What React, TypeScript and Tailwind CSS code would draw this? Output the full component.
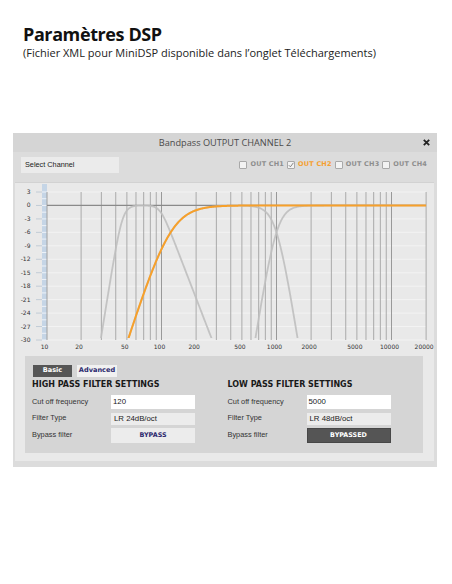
import React from 'react';

// frequency / level → plot coordinates (page pixels)
const X = (f: number) => 46.5 + 115 * Math.log10(f / 10);
const Y = (db: number) => 191 + ((3 - db) * 148) / 33;

const hp = (f: number, fc: number, n: number) => {
  const r = Math.pow(f / fc, n);
  return 20 * Math.log10(r / (1 + r));
};
const lp = (f: number, fc: number, n: number) => {
  const r = Math.pow(f / fc, n);
  return 20 * Math.log10(1 / (1 + r));
};
// straight slope (dB/oct) with a soft knee, sign picks rising or falling side
const knee = (f: number, fk: number, slope: number, dir: 1 | -1, k = 0.1) => {
  const o = (dir * Math.log2(f / fk)) / k;
  return -slope * k * (o > 30 ? o : Math.log(1 + Math.exp(o)));
};

const curve = (fn: (f: number) => number) => {
  const pts: string[] = [];
  for (let i = 0; i <= 500; i++) {
    const f = 10 * Math.pow(2000, i / 500);
    const db = Math.max(fn(f), -60);
    pts.push(`${X(f).toFixed(2)},${Y(db).toFixed(2)}`);
  }
  return 'M' + pts.join(' L');
};

const gridFreqs = [
  20, 30, 40, 50, 60, 70, 80, 90, 100, 200, 300, 400, 500, 600, 700, 800, 900, 1000, 2000, 3000, 4000, 5000,
  6000, 7000, 8000, 9000, 10000, 20000,
];
const xLabels = [10, 20, 50, 100, 200, 500, 1000, 2000, 5000, 10000, 20000];
const dbLabels = [3, 0, -3, -6, -9, -12, -15, -18, -21, -24, -27, -30];

function ResponseChart() {
  const ticks: number[] = [];
  for (let d = 3; d >= -30; d -= 1.5) ticks.push(d);

  return (
    <svg width="419" height="170" viewBox="15 182 419 170" className="block overflow-visible">
      <defs>
        <clipPath id="plot">
          <rect x="47" y="186" width="380" height="151" />
        </clipPath>
      </defs>

      {/* level ruler */}
      <rect x="42" y="183" width="5" height="156" fill="#c5d5e6" />
      {ticks.map((d) => (
        <line key={d} x1="42" x2="47" y1={Y(d)} y2={Y(d)} stroke="#eef3f9" strokeWidth="1" />
      ))}
      {dbLabels.map((d) => (
        <g key={d}>
          <line x1="36" x2="42" y1={Y(d)} y2={Y(d)} stroke="#c2ccd6" strokeWidth="1" />
          <text
            x="30.5"
            y={Y(d) + 2}
            textAnchor="end"
            fontSize="6"
            fill="#333"
            fontFamily="'DejaVu Sans', sans-serif"
          >
            {d}
          </text>
        </g>
      ))}

      {/* grid */}
      {dbLabels
        .filter((d) => d !== 0)
        .map((d) => (
          <line key={d} x1="47" x2="426" y1={Y(d)} y2={Y(d)} stroke="#f3f3f3" strokeWidth="1" />
        ))}
      <line x1="47" x2="47" y1="191" y2="339" stroke="#a0a0a0" strokeWidth="1" />
      {gridFreqs.map((f) => (
        <line
          key={f}
          x1={X(f)}
          x2={X(f)}
          y1="191"
          y2="339"
          stroke={[100, 1000, 10000].includes(f) ? '#999' : '#aaa'}
          strokeWidth="1"
        />
      ))}
      <line x1="47" x2="426" y1={Y(0)} y2={Y(0)} stroke="#8a8a8a" strokeWidth="1.3" />

      {xLabels.map((f) => (
        <text
          key={f}
          x={X(f) - 2}
          y="348"
          textAnchor="middle"
          fontSize="6"
          fill="#333"
          fontFamily="'DejaVu Sans', sans-serif"
        >
          {f}
        </text>
      ))}

      {/* other channels */}
      <g clipPath="url(#plot)" fill="none" stroke="#bfbfbf" strokeWidth="1.8" strokeOpacity="0.9">
        <path d={curve((f) => knee(f, 45.6, 48, -1) + knee(f, 97.6, 20, 1))} />
        <path d={curve((f) => hp(f, 120, 4) + lp(f, 1000, 8))} />
        <path d={curve((f) => hp(f, 1000, 8))} />
      </g>
      {/* current channel */}
      <g clipPath="url(#plot)" fill="none" stroke="#f7a02a" strokeWidth="2">
        <path d={curve((f) => hp(f, 120, 4))} />
      </g>
    </svg>
  );
}

function ChannelBox({ label, checked }: { label: string; checked?: boolean }) {
  return (
    <div className="flex items-center gap-[3px]">
      <span className="w-[8px] h-[8px] border border-[#a9a9a9] bg-[#f3f3f3] rounded-[1px] flex items-center justify-center">
        {checked && (
          <svg width="6" height="6" viewBox="0 0 6 6">
            <path d="M0.8 3.2 L2.4 4.8 L5.4 0.8" fill="none" stroke="#777" strokeWidth="0.9" />
          </svg>
        )}
      </span>
      <span
        className={`text-[6.5px] font-bold tracking-[0.2px] ${checked ? 'text-[#f5a031]' : 'text-[#8e8e8e]'}`}
        style={{ fontFamily: "'DejaVu Sans', sans-serif" }}
      >
        {label}
      </span>
    </div>
  );
}

function FilterColumn({
  title,
  freq,
  type,
  bypassed,
}: {
  title: string;
  freq: string;
  type: string;
  bypassed?: boolean;
}) {
  return (
    <div className="w-[222px]">
      <div className="h-[10px] flex items-center text-[8px] font-bold text-[#1a1a1a] font-['DejaVu_Sans',sans-serif]">
        {title}
      </div>
      <div className="mt-[5px] flex items-center h-[14px]">
        <span className="w-[79px] text-[7.4px] text-[#333]">Cut off frequency</span>
        <span className="w-[84px] h-full bg-white flex items-center pl-[2px] text-[7.8px] text-[#222]">{freq}</span>
      </div>
      <div className="mt-[4px] flex items-center h-[12px]">
        <span className="w-[79px] text-[7.4px] text-[#333] -mt-[2px]">Filter Type</span>
        <span className="w-[84px] h-full bg-[#ececec] flex items-center pl-[3px] text-[7.8px] text-[#222]">
          {type}
        </span>
      </div>
      <div className="mt-[3px] flex items-center h-[15px]">
        <span className="w-[79px] text-[7.4px] text-[#333] -mt-[1px]">Bypass filter</span>
        <span
          className={`w-[84px] h-full flex items-center justify-center text-[6.4px] font-bold font-['DejaVu_Sans',sans-serif] ${
            bypassed ? 'bg-[#555] text-white border border-[#474747]' : 'bg-[#ececec] text-[#2c2a6e]'
          }`}
        >
          {bypassed ? 'BYPASSED' : 'BYPASS'}
        </span>
      </div>
    </div>
  );
}

export default function App() {
  return (
    <div className="w-[452px] h-[584px] bg-white font-['Liberation_Sans',Arial,sans-serif]">
      <div className="pl-[23px] pt-[25px] font-['Open_Sans',sans-serif]">
        <h1 className="text-[18px] leading-[19px] font-bold text-[#111] tracking-[-0.4px]">Paramètres DSP</h1>
        <p className="mt-[3px] text-[11px] leading-[11px] text-[#222]">
          (Fichier XML pour MiniDSP disponible dans l’onglet Téléchargements)
        </p>
      </div>

      {/* Bandpass dialog */}
      <div className="mt-[75px] ml-[13px] w-[424px] bg-[#dcdcdc] pb-[6px]">
        <div className="h-[19px] bg-[#d5d5d5] grid grid-cols-[1fr_auto_1fr] items-center">
          <span />
          <span className="text-[9.2px] text-[#4a4a4a] font-['Open_Sans',sans-serif]">Bandpass OUTPUT CHANNEL 2</span>
          <span className="flex justify-end pr-[7px]">
            <svg width="7" height="7" viewBox="0 0 7 7">
              <path d="M0.8 0.8 L6.2 6.2 M6.2 0.8 L0.8 6.2" stroke="#222" strokeWidth="1.8" />
            </svg>
          </span>
        </div>

        <div className="h-[29px] flex items-start justify-between pl-[8px] pr-[10px] pt-[5px]">
          <div className="w-[98px] h-[16px] bg-[#ebebeb] flex items-center pl-[4px] text-[7.3px] text-[#222]">
            Select Channel
          </div>
          <div className="flex items-center gap-[3px] h-[16px]">
            <ChannelBox label="OUT CH1" />
            <ChannelBox label="OUT CH2" checked />
            <ChannelBox label="OUT CH3" />
            <ChannelBox label="OUT CH4" />
          </div>
        </div>

        <div className="mt-[1px] ml-[2px] mr-[3px] bg-[#e9e9e9] border-t border-[#d2d2d2] pb-[8px]">
          <ResponseChart />

          <div className="mt-[3px] ml-[10px] mr-[11px] bg-[#d5d5d5] pt-[9px] pb-[10px]">
            <div className="flex h-[12px] pl-[8px] gap-[5px]">
              <span className="w-[39px] bg-[#565656] text-white text-[6.6px] font-bold flex items-center justify-center font-['DejaVu_Sans',sans-serif]">
                Basic
              </span>
              <span className="w-[40px] bg-[#f1f1f1] text-[#2c2a6e] text-[6.6px] font-bold flex items-center justify-center font-['DejaVu_Sans',sans-serif]">
                Advanced
              </span>
            </div>
            <div className="mt-[3px] flex pl-[7px]">
              <FilterColumn title="HIGH PASS FILTER SETTINGS" freq="120" type="LR 24dB/oct" />
              <FilterColumn title="LOW PASS FILTER SETTINGS" freq="5000" type="LR 48dB/oct" bypassed />
            </div>
          </div>
        </div>
      </div>
    </div>
  );
}
